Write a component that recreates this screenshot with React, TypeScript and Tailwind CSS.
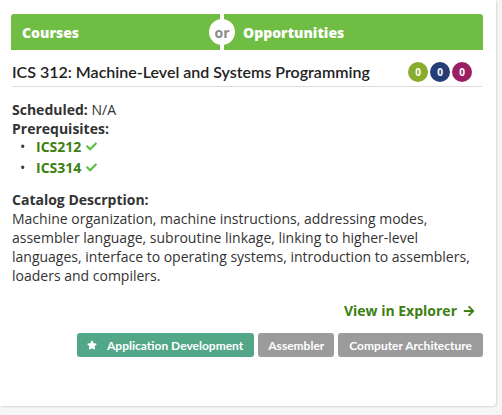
import React from 'react';
import { FaCheck, FaArrowRight, FaStar } from 'react-icons/fa';

const prereqs = ['ICS212', 'ICS314'];

const description =
  'Machine organization, machine instructions, addressing modes, assembler language, subroutine linkage, linking to higher-level languages, interface to operating systems, introduction to assemblers, loaders and compilers.';

const App: React.FC = () => {
  return (
    <div className="w-[502px] h-[415px] bg-[#f6f6f6] overflow-hidden">
      <div className="w-[496px] h-[406px] bg-white rounded-br-[4px] shadow-[1px_1px_2px_rgba(0,0,0,0.12)] pl-[11px] pr-[13px] pt-[14px] font-['Open_Sans',sans-serif] text-[#333]">
        {/* Header */}
        <div className="relative flex h-[36px] rounded-t-[3px] bg-[#70bd43] text-white font-extrabold text-[14px]">
          <div className="flex items-center w-[209px] pl-[11px]">Courses</div>
          <div className="w-[4px] bg-white"></div>
          <div className="flex items-center pl-[19px]">Opportunities</div>
          <div className="absolute left-[198px] top-[5px] w-[26px] h-[26px] rounded-full bg-white flex items-center justify-center text-[14px] font-bold text-[#8a8a8a]">
            or
          </div>
        </div>

        {/* Title */}
        <div className="flex items-center justify-between mt-[11px] pb-[3px] border-b border-[#dddddd] mx-[1px]">
          <h2 className="font-['Lato',sans-serif] font-semibold text-[16px] leading-[22px] text-[#222]">
            ICS 312: Machine-Level and Systems Programming
          </h2>
          <div className="flex gap-[2px] mr-[10px]">
            <span className="w-[20px] h-[20px] rounded-full bg-[#86ad2c] text-white text-[10px] font-bold flex items-center justify-center">0</span>
            <span className="w-[20px] h-[20px] rounded-full bg-[#263c76] text-white text-[10px] font-bold flex items-center justify-center">0</span>
            <span className="w-[20px] h-[20px] rounded-full bg-[#9a1f62] text-white text-[10px] font-bold flex items-center justify-center">0</span>
          </div>
        </div>

        {/* Body */}
        <div className="pl-[1px] mt-[13px] text-[14px] leading-[19px]">
          <p>
            <span className="font-bold">Scheduled:</span> N/A
          </p>
          <p className="font-bold">Prerequisites:</p>
          <ul className="-mt-[2px]">
            {prereqs.map((p) => (
              <li key={p} className="flex items-center h-[21px] pl-[8px]">
                <span className="w-[16px] text-[#333]">•</span>
                <span className="font-bold text-[#3f7f12]">{p}</span>
                <FaCheck className="ml-[5px] w-[11px] h-[11px] text-[#5cbf4a]" />
              </li>
            ))}
          </ul>

          <p className="font-bold mt-[12px]">Catalog Descrption:</p>
          <p className="leading-[19px] pr-[6px]">{description}</p>

          <div className="flex justify-end mt-[16px] pr-[8px]">
            <span className="flex items-center font-bold text-[#3d7f12]">
              View in Explorer
              <FaArrowRight className="ml-[6px] w-[12px] h-[12px]" />
            </span>
          </div>

          <div className="flex justify-end gap-[4px] mt-[13px] font-['Lato',sans-serif] font-bold text-[12px] text-white">
            <span className="flex items-center h-[24px] pl-[10px] pr-[11px] rounded-[3px] bg-[#52a789]">
              <FaStar className="w-[10px] h-[10px] mr-[10px]" />
              Application Development
            </span>
            <span className="flex items-center h-[24px] px-[10px] rounded-[3px] bg-[#9b9b9b]">Assembler</span>
            <span className="flex items-center h-[24px] px-[11px] rounded-[3px] bg-[#9b9b9b]">Computer Architecture</span>
          </div>
        </div>
      </div>
    </div>
  );
};

export default App;
